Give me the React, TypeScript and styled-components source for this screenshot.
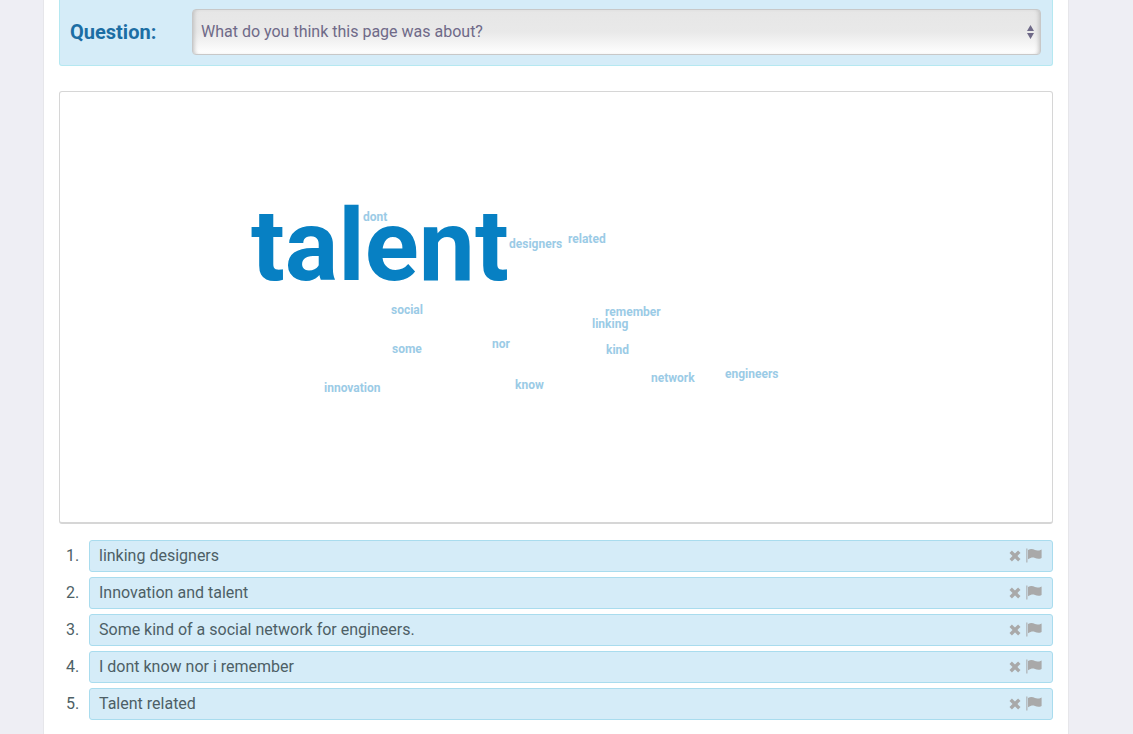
import React, { useState } from "react";
import styled, { createGlobalStyle } from "styled-components";

const GlobalStyle = createGlobalStyle`
  * { box-sizing: border-box; }
  body {
    margin: 0;
    background: #eeeef4;
    color: #4d5f66;
    font-family: Roboto, "Liberation Sans", sans-serif;
    font-size: 16px;
    line-height: 20px;
  }
`;

const Page = styled.main`
  min-height: 100vh;
  margin: 0 64px 0 43px;
  padding: 0 15px 14px;
  background: #fff;
  border: solid #e6e6ea;
  border-width: 0 1px;
`;

const QuestionBar = styled.form`
  display: flex;
  align-items: center;
  height: 66px;
  padding: 0 11px 1px 10px;
  background: #d5ecf8;
  border: 1px solid #b5e8f1;
  border-top: 0;
  border-radius: 0 0 3px 3px;
`;

const QuestionLabel = styled.label`
  flex: 0 0 122px;
  color: #1c6ea4;
  font-size: 20px;
  font-weight: 700;
`;

const SelectWrap = styled.div`
  position: relative;
  flex: 1;
  display: flex;
`;

const QuestionSelect = styled.select`
  appearance: none;
  width: 100%;
  height: 46px;
  padding: 0 24px 0 8px;
  color: #6f6a88;
  font: inherit;
  background: linear-gradient(#e6e6e6, #e9e9e9 50%, #fff);
  border: 1px solid #c8c8c8;
  border-radius: 4px;
  box-shadow: inset 4px 0 4px -3px #bdbdbd, inset -4px 0 4px -3px #bdbdbd;
`;

const SelectArrows = styled.svg`
  position: absolute;
  top: 16px;
  right: 7px;
  pointer-events: none;
`;

const Cloud = styled.section`
  position: relative;
  height: 433px;
  margin: 25px 0 16px;
  border: 1px solid #d6d6d6;
  border-bottom-width: 2px;
  border-radius: 3px;
`;

const Word = styled.span<{ $x: number; $y: number; $big?: boolean }>`
  position: absolute;
  left: ${(p) => p.$x}px;
  top: ${(p) => p.$y}px;
  color: ${(p) => (p.$big ? "#0780c3" : "#9bcbe6")};
  font-size: ${(p) => (p.$big ? 100 : 12)}px;
  line-height: ${(p) => (p.$big ? 100 : 14)}px;
  font-weight: 700;
`;

const AnswerList = styled.ol`
  display: flex;
  flex-direction: column;
  gap: 5px;
  margin: 0;
  padding: 0;
  list-style: none;
`;

const AnswerItem = styled.li`
  display: flex;
  align-items: center;
`;

const AnswerNumber = styled.span`
  flex: 0 0 30px;
  padding-left: 7px;
`;

const Answer = styled.div`
  flex: 1;
  display: flex;
  align-items: center;
  height: 32px;
  padding: 0 10px 0 9px;
  background: #d5ecf8;
  border: 1px solid #a9dcee;
  border-radius: 3px;
`;

const AnswerText = styled.span`
  flex: 1;
`;

const Actions = styled.div`
  display: flex;
  gap: 4px;
`;

const IconButton = styled.button`
  display: flex;
  padding: 0;
  color: #a9a9a9;
  background: none;
  border: 0;
  cursor: pointer;
`;

const words = [
  { text: "talent", x: 191, y: 104, big: true },
  { text: "dont", x: 303, y: 118 },
  { text: "designers", x: 449, y: 145 },
  { text: "related", x: 508, y: 140 },
  { text: "social", x: 331, y: 211 },
  { text: "remember", x: 545, y: 213 },
  { text: "linking", x: 532, y: 225 },
  { text: "some", x: 332, y: 250 },
  { text: "nor", x: 432, y: 245 },
  { text: "kind", x: 546, y: 251 },
  { text: "network", x: 591, y: 279 },
  { text: "engineers", x: 665, y: 275 },
  { text: "innovation", x: 264, y: 289 },
  { text: "know", x: 455, y: 286 },
];

const answers = [
  "linking designers",
  "Innovation and talent",
  "Some kind of a social network for engineers.",
  "I dont know nor i remember",
  "Talent related",
];

const RemoveIcon = () => (
  <svg width="14" height="16" viewBox="0 0 14 16" fill="none" stroke="currentColor" strokeWidth="3.4" strokeLinecap="square" strokeLinejoin="round" aria-hidden="true">
    <path d="M3.9 4.9L10.1 11.1M10.1 4.9L3.9 11.1" />
  </svg>
);

const FlagIcon = () => (
  <svg width="16" height="16" viewBox="0 0 16 16" fill="currentColor" aria-hidden="true">
    <path d="M0 .5h1.6v14H0z" opacity="0.65" />
    <path d="M2 2C5 .4 7 1.2 9 2.1S13 2.6 15.6 1.4V10C13 11.4 11 10.8 9 10S5 9.4 2 11.2z" />
  </svg>
);

export default function App() {
  const [items, setItems] = useState(answers);
  return (
    <>
      <GlobalStyle />
      <Page>
        <QuestionBar>
          <QuestionLabel htmlFor="question">Question:</QuestionLabel>
          <SelectWrap>
            <QuestionSelect id="question">
              <option>What do you think this page was about?</option>
            </QuestionSelect>
            <SelectArrows width="7" height="14" viewBox="0 0 7 14" fill="#6f6a88" aria-hidden="true">
              <path d="M3.5 0L7 6H0zM0 8h7l-3.5 6z" />
            </SelectArrows>
          </SelectWrap>
        </QuestionBar>
        <Cloud aria-label="Word cloud">
          {words.map((w) => (
            <Word key={w.text} $x={w.x} $y={w.y} $big={w.big}>{w.text}</Word>
          ))}
        </Cloud>
        <AnswerList>
          {items.map((text, i) => (
            <AnswerItem key={text}>
              <AnswerNumber>{i + 1}.</AnswerNumber>
              <Answer>
                <AnswerText>{text}</AnswerText>
                <Actions>
                  <IconButton type="button" aria-label="Remove answer" onClick={() => setItems(items.filter((t) => t !== text))}>
                    <RemoveIcon />
                  </IconButton>
                  <IconButton type="button" aria-label="Flag answer">
                    <FlagIcon />
                  </IconButton>
                </Actions>
              </Answer>
            </AnswerItem>
          ))}
        </AnswerList>
      </Page>
    </>
  );
}
